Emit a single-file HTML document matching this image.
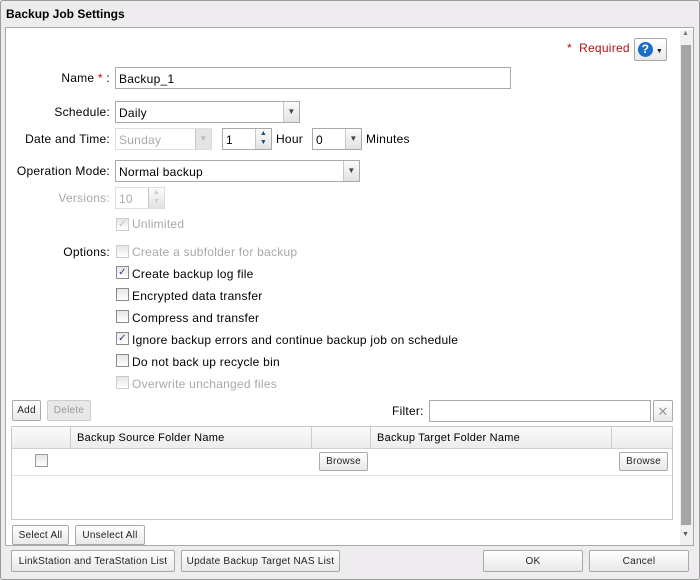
<!DOCTYPE html><html><head><style>
*{box-sizing:border-box;margin:0;padding:0}
body{width:700px;height:580px;background:#eeecef;font:12px "Liberation Sans",sans-serif;color:#000;position:relative;overflow:hidden;letter-spacing:0.25px}
.a{position:absolute}
.win{left:0;top:0;width:700px;height:580px;border:1px solid #9a9a9a;border-radius:3px}
.panel{left:5px;top:27px;width:689px;height:519px;background:#fff;border:1px solid #a8a8a8}
.inp{position:absolute;border:1px solid #a9a9a9;background:#fff;height:22px;padding:4px 3px 2px;font-size:12px}
.dd{position:absolute;right:0;top:0;width:16px;height:20px;background:linear-gradient(#fbfbfb,#e2e2e2);border-left:1px solid #c8c8c8;font-size:8px;text-align:center;line-height:20px;color:#444}
.lbl{position:absolute;text-align:right;width:110px;font-size:12px}
.btn{position:absolute;border:1px solid #a9a9a9;border-radius:2px;background:linear-gradient(#fff,#e8e8e8);font-size:10px;text-align:center;color:#222;padding-top:1px}
.cb{position:absolute;width:13px;height:13px;border:1px solid #8a8a8a;background:linear-gradient(#e6e6e6,#fff);font-size:10px;line-height:11px;text-align:center;color:#2a3a8a}
.cbd{border-color:#ccc;color:#bbb}
.t{position:absolute;font-size:12px}
.g{color:#a8a8a8}
</style></head><body>
<div class="a win"></div>
<div class="a" style="left:6px;top:7px;font-weight:bold;font-size:12px;letter-spacing:0">Backup Job Settings</div>
<div class="a panel"></div>
<div class="a" style="left:680px;top:30px;width:13px;height:515px;background:#f0f0f0"></div>
<div class="a" style="left:681px;top:45px;width:10px;height:480px;background:#a5a5a5"></div>
<div class="a" style="left:682px;top:30px;font-size:7px;color:#777">▲</div>
<div class="a" style="left:682px;top:531px;font-size:7px;color:#555">▼</div>

<div class="t" style="left:567px;top:41px;color:#b01010">*&nbsp; Required</div>
<div class="btn" style="left:634px;top:38px;width:33px;height:23px;padding:0"><span style="display:inline-block;width:15px;height:15px;border-radius:50%;background:#1a6ec8;color:#fff;font-weight:bold;font-size:12px;line-height:15px;margin-top:3px">?</span> <span style="font-size:7px">▼</span></div>

<div class="lbl" style="left:0;top:71px">Name <span style="color:#c00">*</span> :</div>
<div class="inp" style="left:115px;top:67px;width:396px">Backup_1</div>
<div class="lbl" style="left:0;top:105px">Schedule:</div>
<div class="inp" style="left:115px;top:101px;width:185px">Daily<div class="dd">▼</div></div>
<div class="lbl" style="left:0;top:132px">Date and Time:</div>
<div class="inp g" style="left:115px;top:128px;width:97px;border-color:#ddd">Sunday<div class="dd" style="color:#bbb;background:#e4e4e4">▼</div></div>
<div class="inp" style="left:222px;top:128px;width:50px">1<div class="dd" style="line-height:9px;font-size:7px;color:#1a4a8a">▲<br>▼</div></div>
<div class="t" style="left:276px;top:132px">Hour</div>
<div class="inp" style="left:312px;top:128px;width:50px">0<div class="dd">▼</div></div>
<div class="t" style="left:366px;top:132px">Minutes</div>
<div class="lbl" style="left:0;top:164px">Operation Mode:</div>
<div class="inp" style="left:115px;top:160px;width:245px">Normal backup<div class="dd">▼</div></div>
<div class="lbl g" style="left:0;top:191px">Versions:</div>
<div class="inp g" style="left:115px;top:187px;width:50px;border-color:#ddd">10<div class="dd" style="color:#ccc;line-height:9px;font-size:7px">▲<br>▼</div></div>
<div class="cb cbd" style="left:116px;top:218px">✓</div><div class="t g" style="left:132px;top:217px">Unlimited</div>
<div class="lbl" style="left:0;top:245px">Options:</div>
<div class="cb cbd" style="left:116px;top:245px"></div><div class="t g" style="left:132px;top:245px">Create a subfolder for backup</div>
<div class="cb" style="left:116px;top:266px">✓</div><div class="t" style="left:132px;top:267px">Create backup log file</div>
<div class="cb" style="left:116px;top:288px"></div><div class="t" style="left:132px;top:289px">Encrypted data transfer</div>
<div class="cb" style="left:116px;top:310px"></div><div class="t" style="left:132px;top:311px">Compress and transfer</div>
<div class="cb" style="left:116px;top:332px">✓</div><div class="t" style="left:132px;top:333px">Ignore backup errors and continue backup job on schedule</div>
<div class="cb" style="left:116px;top:354px"></div><div class="t" style="left:132px;top:355px">Do not back up recycle bin</div>
<div class="cb cbd" style="left:116px;top:376px"></div><div class="t g" style="left:132px;top:377px">Overwrite unchanged files</div>

<div class="btn" style="left:12px;top:400px;width:29px;height:21px;line-height:18px">Add</div>
<div class="btn" style="left:47px;top:400px;width:44px;height:21px;line-height:18px;color:#999;background:#e8e8e8;border-color:#ccc">Delete</div>
<div class="t" style="left:392px;top:404px">Filter:</div>
<div class="inp" style="left:429px;top:400px;width:222px"></div>
<div class="btn" style="left:653px;top:400px;width:20px;height:22px;line-height:19px;color:#999;font-size:13px">✕</div>

<div class="a" style="left:11px;top:426px;width:662px;height:94px;border:1px solid #c8c8c8"></div>
<div class="a" style="left:12px;top:427px;width:660px;height:22px;background:linear-gradient(#fafafa,#ececec);border-bottom:1px solid #d0d0d0"></div>
<div class="a" style="left:70px;top:427px;width:1px;height:22px;background:#ccc"></div>
<div class="a" style="left:311px;top:427px;width:1px;height:22px;background:#ccc"></div>
<div class="a" style="left:370px;top:427px;width:1px;height:22px;background:#ccc"></div>
<div class="a" style="left:611px;top:427px;width:1px;height:22px;background:#ccc"></div>
<div class="t" style="left:77px;top:432px;font-size:11px">Backup Source Folder Name</div>
<div class="t" style="left:377px;top:432px;font-size:11px">Backup Target Folder Name</div>
<div class="cb" style="left:35px;top:454px;border-color:#999"></div>
<div class="btn" style="left:319px;top:452px;width:49px;height:19px;line-height:16px">Browse</div>
<div class="btn" style="left:619px;top:452px;width:49px;height:19px;line-height:16px">Browse</div>
<div class="a" style="left:12px;top:475px;width:660px;height:1px;background:#e6e6e6"></div>

<div class="btn" style="left:12px;top:525px;width:57px;height:20px;line-height:17px">Select All</div>
<div class="btn" style="left:75px;top:525px;width:70px;height:20px;line-height:17px">Unselect All</div>

<div class="btn" style="left:11px;top:550px;width:164px;height:22px;line-height:19px">LinkStation and TeraStation List</div>
<div class="btn" style="left:181px;top:550px;width:159px;height:22px;line-height:19px">Update Backup Target NAS List</div>
<div class="btn" style="left:483px;top:550px;width:100px;height:22px;line-height:19px">OK</div>
<div class="btn" style="left:589px;top:550px;width:100px;height:22px;line-height:19px">Cancel</div>
</body></html>
